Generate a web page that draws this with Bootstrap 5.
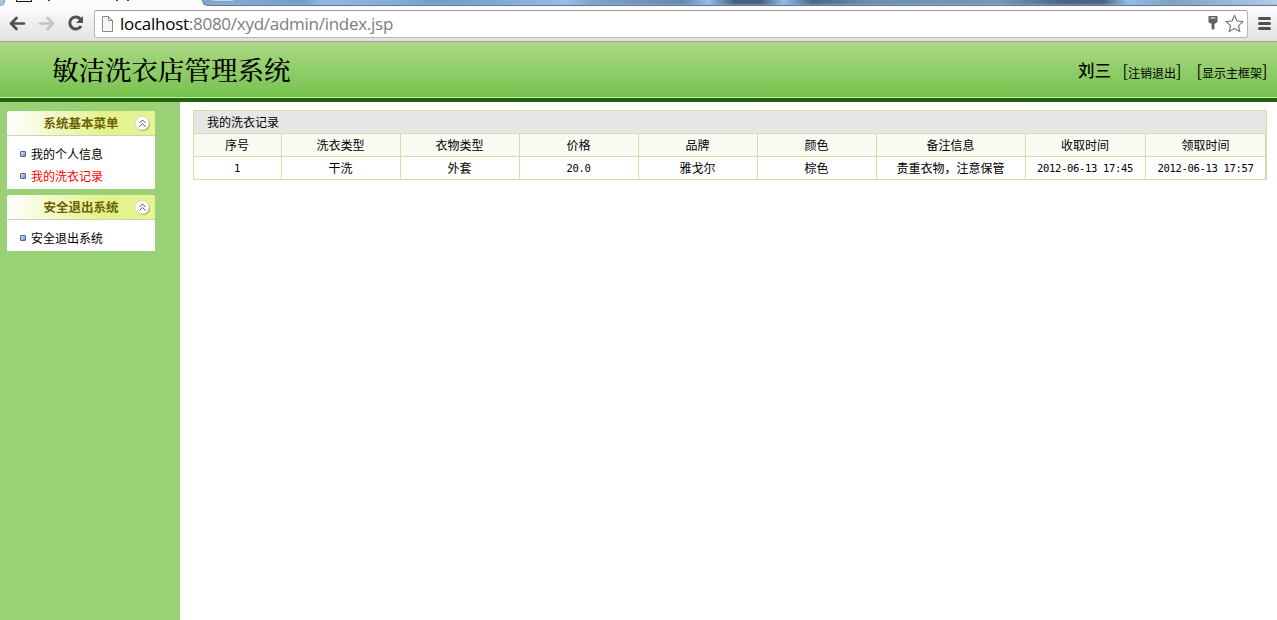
<!DOCTYPE html>
<html lang="zh-CN">
<head>
<meta charset="utf-8">
<title>敏洁洗衣店管理系统</title>
<link href="https://cdn.jsdelivr.net/npm/bootstrap@5.3.0/dist/css/bootstrap.min.css" rel="stylesheet">
<style>
body{font:12px/16px "Liberation Sans","Noto Sans CJK SC",sans-serif;color:#000;height:620px;background:#fff}
.tabstrip{height:6px;background:#fcfbfc}
.glass-left{width:5px;height:6px;background:#a9c4dc;border:solid #8797ac;border-width:0 1px 1px 0;border-radius:0 0 6px 0}
.page-tab{width:197px}
.fav{left:11px;top:-9px;width:16px;height:11px;border:1px solid #111}
.tick{top:0;width:2px;height:1px;background:#4a3a3a}
.tick-a{left:43px}.tick-b{left:111px}.tick-c{left:122px}
.glass{height:6px;border:solid #64779a;border-width:0 0 1px 1px;border-radius:0 0 0 6px;background:linear-gradient(transparent 3px,rgba(150,180,210,.55)),linear-gradient(90deg,#7fa9d3,#7fa9d3 36px,#6f9dc8 100px,#8fbbe0 120px,#7fabd8 200px,#6f9dc8 230px,#79a5d3 280px,#95bfe6 364px,#7da3c6 390px,#6489ad 480px,#8fbfe8 505px,#465f7a 532px,#465f7a 558px,#8fbfe8 580px,#4b6683 610px,#6b8fb0 667px,#7398bb 797px,#48647e 860px,#4b6580 900px,#8fbfe8 925px,#7ea0c0 970px,#b4cde4 1074px)}
.next-tab{left:7px;top:-6px;width:26px;height:8px;background:#c3d5e6;border:1px solid #8199b4;border-radius:0 0 4px 4px}
.toolbar{height:36px;background:linear-gradient(#fdfbfd,#e3e2e3);border-bottom:1px solid #a0a29e}
.nav-icons{width:94px;height:35px}
.omni{height:28px;margin-top:4px;width:1154px;border:1px solid #b9b6b8;border-top-color:#a39c9e;border-radius:3px;background:#fff}
.address{font:17px/26px "Open Sans","Noto Sans",sans-serif;color:#7d7d7d;letter-spacing:-.27px}
.site-head{height:60px;background:linear-gradient(#acd886,#76c24e 55px);border-bottom:4px solid #226311;box-shadow:inset 0 -1px #c5f0a0}
.site-name{font:500 26.5px/34px "Noto Serif CJK SC","Noto Sans CJK SC",serif;margin:0 0 2px 52px}
.user-bar{padding:4px 7px 0 0;gap:10px}
.user{font-size:16.5px;line-height:18px;font-weight:500;margin:-2px -1px 0 0}
.bracket{display:inline-block;width:8px;font:400 16px/18px "Noto Sans CJK SC",sans-serif;text-align:right;margin-top:-1px}
.bracket.end{text-align:left}
.side{width:180px;background:#9ad176;padding:9px 0 0 7px}
.panel{width:148px;margin-bottom:6px;background:#fff;border-radius:3px 3px 0 0}
.panel-top{height:25px;border-bottom:1px solid #cbd6ae;border-radius:3px 3px 0 0;background:linear-gradient(90deg,#fff,#e2f28c 65%,#e7f494);color:#6d6100;font-weight:700;font-size:12.5px;line-height:26px}
.fold{right:4px;top:4px}
.panel-list{padding:7px 0 2px 13px}
.panel-list li{height:22px;line-height:22px}
.panel-list span{padding-top:2px}
.current{color:#f00}
.dot{width:6px;height:6px;border:1px solid #59667e;border-radius:1px;background:linear-gradient(135deg,#c9e0ff,#6998de);margin-right:5px}
.records{margin:8px 0 0 13px;width:1074px;table-layout:fixed;border-collapse:collapse;text-align:center}
.records td,.records th{height:23px;padding:2px 1px 0 0;border:1px solid #d1dfa9;font-weight:400;line-height:20px}
.records .heading{background:#e6e6e6;text-align:left;padding-left:13px}
.records thead tr+tr th{background:#fafaf2;text-align:center}
.records tr:not(:first-child)>:last-child,.records tbody td:last-child{box-shadow:inset -1px 0 #d1dfa9}
.records .num{font:10.5px/20px "DejaVu Sans Mono","Liberation Mono",monospace;letter-spacing:-.32px;padding-top:0}
</style>
<script src="https://cdn.jsdelivr.net/npm/bootstrap@5.3.0/dist/js/bootstrap.bundle.min.js"></script>
</head>
<body class="d-flex flex-column overflow-hidden m-0">
<div class="tabstrip d-flex overflow-hidden flex-shrink-0">
  <div class="glass-left flex-shrink-0"></div>
  <div class="page-tab position-relative flex-shrink-0"><i class="fav position-absolute"></i><i class="tick tick-a position-absolute"></i><i class="tick tick-b position-absolute"></i><i class="tick tick-c position-absolute"></i></div>
  <div class="glass position-relative flex-grow-1"><div class="next-tab position-absolute"></div></div>
</div>
<div class="toolbar d-flex flex-shrink-0">
  <svg class="nav-icons flex-shrink-0" viewBox="0 6 94 35" fill="none">
    <path d="M24 23.5H11.500M16.500 18l-5.500 5.500 5.500 5.500" stroke="#505050" stroke-width="2.700" stroke-linecap="round" stroke-linejoin="round"/>
    <path d="M40 23.500h12.500M47.500 18l5.500 5.500-5.500 5.500" stroke="#c4c4c4" stroke-width="2.700" stroke-linecap="round" stroke-linejoin="round"/>
    <path d="M80.500 19.300A6 6 0 1 0 81 26" stroke="#505050" stroke-width="3"/>
    <path d="M83 16v7h-7z" fill="#505050"/>
  </svg>
  <div class="omni d-flex flex-shrink-0">
    <svg width="25" height="26" viewBox="95 11 25 26"><path d="M102.500 16.500h6l4 4v11h-10z" fill="#f7f7f7" stroke="#898989"/><path d="M108.500 16.500v4h4" fill="none" stroke="#898989"/></svg>
    <div class="address flex-grow-1"><span class="text-black">localhost</span>:8080/xyd/admin/index.jsp</div>
    <svg width="43" height="26" viewBox="1204 11 43 26"><path d="M1208.500 16h9v6l-2 1.500h-1v5l-1.500 1.500-1.500-1.500v-5h-1l-2-1.500z" fill="#626262"/><path d="M1210.500 18h5" stroke="#fff"/><path d="M1234.500 15.500l2.500 5.500 6 .6-4.500 4 1.300 6-5.300-3.100-5.300 3.100 1.300-6-4.500-4 6-.6z" fill="#fff" stroke="#777" stroke-width="1.200" stroke-linejoin="round"/></svg>
  </div>
  <svg width="29" height="35" viewBox="1248 6 29 35"><path d="M1259.500 18.500h10m-10 5h10m-10 5h10" stroke="#505050" stroke-width="3" stroke-linecap="round"/></svg>
</div>
<header class="site-head d-flex flex-shrink-0 align-items-center justify-content-between">
  <h1 class="site-name">敏洁洗衣店管理系统</h1>
  <div class="user-bar d-flex align-items-center"><span class="user">刘三</span><span class="d-flex"><span class="bracket">[</span><span class="pt-1">注销退出</span><span class="bracket end">]</span></span><span class="d-flex"><span class="bracket">[</span><span class="pt-1">显示主框架</span><span class="bracket end">]</span></span></div>
</header>
<div class="d-flex flex-grow-1">
  <aside class="side flex-shrink-0">
    <section class="panel">
      <div class="panel-top position-relative text-center">系统基本菜单<svg class="fold position-absolute" width="17" height="17" viewBox="0 0 17 17"><circle cx="9" cy="9" r="7" fill="#929b70"/><circle cx="8.200" cy="8.200" r="7" fill="#fff" stroke="#c9cfa9" stroke-width=".7"/><path d="M5.500 8l3-3 3 3M5.500 11.500l3-3 3 3" fill="none" stroke="#444" stroke-width=".9"/></svg></div>
      <ul class="panel-list list-unstyled mb-0"><li class="d-flex align-items-center"><i class="dot"></i><span>我的个人信息</span></li><li class="d-flex align-items-center current"><i class="dot"></i><span>我的洗衣记录</span></li></ul>
    </section>
    <section class="panel">
      <div class="panel-top position-relative text-center">安全退出系统<svg class="fold position-absolute" width="17" height="17" viewBox="0 0 17 17"><circle cx="9" cy="9" r="7" fill="#929b70"/><circle cx="8.200" cy="8.200" r="7" fill="#fff" stroke="#c9cfa9" stroke-width=".7"/><path d="M5.500 8l3-3 3 3M5.500 11.500l3-3 3 3" fill="none" stroke="#444" stroke-width=".9"/></svg></div>
      <ul class="panel-list list-unstyled mb-0"><li class="d-flex align-items-center"><i class="dot"></i><span>安全退出系统</span></li></ul>
    </section>
  </aside>
  <main>
    <table class="records">
      <colgroup><col style="width:88px"><col style="width:119px"><col style="width:119px"><col style="width:119px"><col style="width:119px"><col style="width:119px"><col style="width:149px"><col style="width:120px"><col style="width:121px"></colgroup>
      <thead><tr><th class="heading" colspan="9">我的洗衣记录</th></tr>
      <tr><th>序号</th><th>洗衣类型</th><th>衣物类型</th><th>价格</th><th>品牌</th><th>颜色</th><th>备注信息</th><th>收取时间</th><th>领取时间</th></tr></thead>
      <tbody><tr><td class="num">1</td><td>干洗</td><td>外套</td><td class="num">20.0</td><td>雅戈尔</td><td>棕色</td><td>贵重衣物，注意保管</td><td class="num">2012-06-13 17:45</td><td class="num">2012-06-13 17:57</td></tr></tbody>
    </table>
  </main>
</div>
</body>
</html>
